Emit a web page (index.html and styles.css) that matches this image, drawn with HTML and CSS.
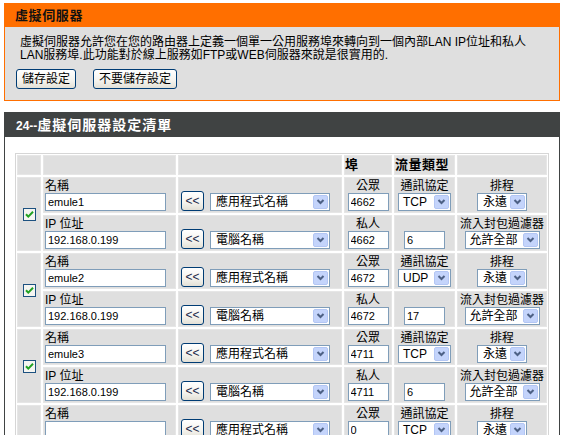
FILE: index.html
```html
<!DOCTYPE html>
<html lang="zh-Hant">
<head>
<meta charset="utf-8">
<title>虛擬伺服器</title>
<link rel="stylesheet" href="styles.css">
</head>
<body>
<div class="page">
  <section class="box">
    <div class="box-head">虛擬伺服器</div>
    <div class="box-body">
      <p class="desc">虛擬伺服器允許您在您的路由器上定義一個單一公用服務埠來轉向到一個內部LAN IP位址和私人<br>LAN服務埠.此功能對於線上服務如FTP或WEB伺服器來說是很實用的.</p>
      <div class="actions">
        <button class="btn">儲存設定</button>
        <button class="btn">不要儲存設定</button>
      </div>
    </div>
  </section>

  <section class="panel">
    <div class="panel-head"><span class="count">24--</span>虛擬伺服器設定清單</div>
    <div class="panel-body">
      <table class="vs">
        <colgroup>
          <col class="c1"><col class="c2"><col class="c3"><col class="c4"><col class="c5"><col class="c6">
        </colgroup>
        <tr class="hdr">
          <td></td><td></td><td></td><td class="h">埠</td><td class="h">流量類型</td><td></td>
        </tr>

        <tr>
          <td rowspan="2" class="chk"><svg class="cb" width="13" height="13" viewBox="0 0 13 13"><rect x="0.5" y="0.5" width="12" height="12" fill="#f5f5f1" stroke="#1c5180"/><path d="M3 6.2 L5.3 8.6 L10 3.8" fill="none" stroke="#21a121" stroke-width="2"/></svg></td>
          <td class="fld"><div class="lbl">名稱</div><input class="txt in-name" value="emule1"></td>
          <td class="pickcell"><div class="pick"><button class="arr">&lt;&lt;</button><span class="sel sel-app"><span>應用程式名稱</span><svg class="dd" width="15" height="14" viewBox="0 0 15 14"><rect x="0.5" y="0.5" width="14" height="13" rx="1.5" fill="#c4d4fb" stroke="#b3c6f4"/><path d="M4.5 5 L7.5 8 L10.5 5" fill="none" stroke="#4d6185" stroke-width="2"/></svg></span></div></td>
          <td class="ctr"><div class="lbl">公眾</div><input class="txt in-port" value="4662"></td>
          <td class="ctr"><div class="lbl">通訊協定</div><span class="sel sel-proto"><span>TCP</span><svg class="dd" width="15" height="14" viewBox="0 0 15 14"><rect x="0.5" y="0.5" width="14" height="13" rx="1.5" fill="#c4d4fb" stroke="#b3c6f4"/><path d="M4.5 5 L7.5 8 L10.5 5" fill="none" stroke="#4d6185" stroke-width="2"/></svg></span></td>
          <td class="ctr"><div class="lbl">排程</div><span class="sel sel-sched"><span>永遠</span><svg class="dd" width="15" height="14" viewBox="0 0 15 14"><rect x="0.5" y="0.5" width="14" height="13" rx="1.5" fill="#c4d4fb" stroke="#b3c6f4"/><path d="M4.5 5 L7.5 8 L10.5 5" fill="none" stroke="#4d6185" stroke-width="2"/></svg></span></td>
        </tr>
        <tr>
          <td class="fld"><div class="lbl">IP 位址</div><input class="txt in-name" value="192.168.0.199"></td>
          <td class="pickcell"><div class="pick"><button class="arr">&lt;&lt;</button><span class="sel sel-app"><span>電腦名稱</span><svg class="dd" width="15" height="14" viewBox="0 0 15 14"><rect x="0.5" y="0.5" width="14" height="13" rx="1.5" fill="#c4d4fb" stroke="#b3c6f4"/><path d="M4.5 5 L7.5 8 L10.5 5" fill="none" stroke="#4d6185" stroke-width="2"/></svg></span></div></td>
          <td class="ctr"><div class="lbl">私人</div><input class="txt in-port" value="4662"></td>
          <td class="ctr"><div class="lbl">&nbsp;</div><input class="txt in-port" value="6"></td>
          <td class="ctr"><div class="lbl">流入封包過濾器</div><span class="sel sel-filter"><span>允許全部</span><svg class="dd" width="15" height="14" viewBox="0 0 15 14"><rect x="0.5" y="0.5" width="14" height="13" rx="1.5" fill="#c4d4fb" stroke="#b3c6f4"/><path d="M4.5 5 L7.5 8 L10.5 5" fill="none" stroke="#4d6185" stroke-width="2"/></svg></span></td>
        </tr>

        <tr>
          <td rowspan="2" class="chk"><svg class="cb" width="13" height="13" viewBox="0 0 13 13"><rect x="0.5" y="0.5" width="12" height="12" fill="#f5f5f1" stroke="#1c5180"/><path d="M3 6.2 L5.3 8.6 L10 3.8" fill="none" stroke="#21a121" stroke-width="2"/></svg></td>
          <td class="fld"><div class="lbl">名稱</div><input class="txt in-name" value="emule2"></td>
          <td class="pickcell"><div class="pick"><button class="arr">&lt;&lt;</button><span class="sel sel-app"><span>應用程式名稱</span><svg class="dd" width="15" height="14" viewBox="0 0 15 14"><rect x="0.5" y="0.5" width="14" height="13" rx="1.5" fill="#c4d4fb" stroke="#b3c6f4"/><path d="M4.5 5 L7.5 8 L10.5 5" fill="none" stroke="#4d6185" stroke-width="2"/></svg></span></div></td>
          <td class="ctr"><div class="lbl">公眾</div><input class="txt in-port" value="4672"></td>
          <td class="ctr"><div class="lbl">通訊協定</div><span class="sel sel-proto"><span>UDP</span><svg class="dd" width="15" height="14" viewBox="0 0 15 14"><rect x="0.5" y="0.5" width="14" height="13" rx="1.5" fill="#c4d4fb" stroke="#b3c6f4"/><path d="M4.5 5 L7.5 8 L10.5 5" fill="none" stroke="#4d6185" stroke-width="2"/></svg></span></td>
          <td class="ctr"><div class="lbl">排程</div><span class="sel sel-sched"><span>永遠</span><svg class="dd" width="15" height="14" viewBox="0 0 15 14"><rect x="0.5" y="0.5" width="14" height="13" rx="1.5" fill="#c4d4fb" stroke="#b3c6f4"/><path d="M4.5 5 L7.5 8 L10.5 5" fill="none" stroke="#4d6185" stroke-width="2"/></svg></span></td>
        </tr>
        <tr>
          <td class="fld"><div class="lbl">IP 位址</div><input class="txt in-name" value="192.168.0.199"></td>
          <td class="pickcell"><div class="pick"><button class="arr">&lt;&lt;</button><span class="sel sel-app"><span>電腦名稱</span><svg class="dd" width="15" height="14" viewBox="0 0 15 14"><rect x="0.5" y="0.5" width="14" height="13" rx="1.5" fill="#c4d4fb" stroke="#b3c6f4"/><path d="M4.5 5 L7.5 8 L10.5 5" fill="none" stroke="#4d6185" stroke-width="2"/></svg></span></div></td>
          <td class="ctr"><div class="lbl">私人</div><input class="txt in-port" value="4672"></td>
          <td class="ctr"><div class="lbl">&nbsp;</div><input class="txt in-port" value="17"></td>
          <td class="ctr"><div class="lbl">流入封包過濾器</div><span class="sel sel-filter"><span>允許全部</span><svg class="dd" width="15" height="14" viewBox="0 0 15 14"><rect x="0.5" y="0.5" width="14" height="13" rx="1.5" fill="#c4d4fb" stroke="#b3c6f4"/><path d="M4.5 5 L7.5 8 L10.5 5" fill="none" stroke="#4d6185" stroke-width="2"/></svg></span></td>
        </tr>

        <tr>
          <td rowspan="2" class="chk"><svg class="cb" width="13" height="13" viewBox="0 0 13 13"><rect x="0.5" y="0.5" width="12" height="12" fill="#f5f5f1" stroke="#1c5180"/><path d="M3 6.2 L5.3 8.6 L10 3.8" fill="none" stroke="#21a121" stroke-width="2"/></svg></td>
          <td class="fld"><div class="lbl">名稱</div><input class="txt in-name" value="emule3"></td>
          <td class="pickcell"><div class="pick"><button class="arr">&lt;&lt;</button><span class="sel sel-app"><span>應用程式名稱</span><svg class="dd" width="15" height="14" viewBox="0 0 15 14"><rect x="0.5" y="0.5" width="14" height="13" rx="1.5" fill="#c4d4fb" stroke="#b3c6f4"/><path d="M4.5 5 L7.5 8 L10.5 5" fill="none" stroke="#4d6185" stroke-width="2"/></svg></span></div></td>
          <td class="ctr"><div class="lbl">公眾</div><input class="txt in-port" value="4711"></td>
          <td class="ctr"><div class="lbl">通訊協定</div><span class="sel sel-proto"><span>TCP</span><svg class="dd" width="15" height="14" viewBox="0 0 15 14"><rect x="0.5" y="0.5" width="14" height="13" rx="1.5" fill="#c4d4fb" stroke="#b3c6f4"/><path d="M4.5 5 L7.5 8 L10.5 5" fill="none" stroke="#4d6185" stroke-width="2"/></svg></span></td>
          <td class="ctr"><div class="lbl">排程</div><span class="sel sel-sched"><span>永遠</span><svg class="dd" width="15" height="14" viewBox="0 0 15 14"><rect x="0.5" y="0.5" width="14" height="13" rx="1.5" fill="#c4d4fb" stroke="#b3c6f4"/><path d="M4.5 5 L7.5 8 L10.5 5" fill="none" stroke="#4d6185" stroke-width="2"/></svg></span></td>
        </tr>
        <tr>
          <td class="fld"><div class="lbl">IP 位址</div><input class="txt in-name" value="192.168.0.199"></td>
          <td class="pickcell"><div class="pick"><button class="arr">&lt;&lt;</button><span class="sel sel-app"><span>電腦名稱</span><svg class="dd" width="15" height="14" viewBox="0 0 15 14"><rect x="0.5" y="0.5" width="14" height="13" rx="1.5" fill="#c4d4fb" stroke="#b3c6f4"/><path d="M4.5 5 L7.5 8 L10.5 5" fill="none" stroke="#4d6185" stroke-width="2"/></svg></span></div></td>
          <td class="ctr"><div class="lbl">私人</div><input class="txt in-port" value="4711"></td>
          <td class="ctr"><div class="lbl">&nbsp;</div><input class="txt in-port" value="6"></td>
          <td class="ctr"><div class="lbl">流入封包過濾器</div><span class="sel sel-filter"><span>允許全部</span><svg class="dd" width="15" height="14" viewBox="0 0 15 14"><rect x="0.5" y="0.5" width="14" height="13" rx="1.5" fill="#c4d4fb" stroke="#b3c6f4"/><path d="M4.5 5 L7.5 8 L10.5 5" fill="none" stroke="#4d6185" stroke-width="2"/></svg></span></td>
        </tr>

        <tr>
          <td rowspan="2" class="chk"><svg class="cb" width="13" height="13" viewBox="0 0 13 13"><rect x="0.5" y="0.5" width="12" height="12" fill="#f5f5f1" stroke="#1c5180"/></svg></td>
          <td class="fld"><div class="lbl">名稱</div><input class="txt in-name" value=""></td>
          <td class="pickcell"><div class="pick"><button class="arr">&lt;&lt;</button><span class="sel sel-app"><span>應用程式名稱</span><svg class="dd" width="15" height="14" viewBox="0 0 15 14"><rect x="0.5" y="0.5" width="14" height="13" rx="1.5" fill="#c4d4fb" stroke="#b3c6f4"/><path d="M4.5 5 L7.5 8 L10.5 5" fill="none" stroke="#4d6185" stroke-width="2"/></svg></span></div></td>
          <td class="ctr"><div class="lbl">公眾</div><input class="txt in-port" value="0"></td>
          <td class="ctr"><div class="lbl">通訊協定</div><span class="sel sel-proto"><span>TCP</span><svg class="dd" width="15" height="14" viewBox="0 0 15 14"><rect x="0.5" y="0.5" width="14" height="13" rx="1.5" fill="#c4d4fb" stroke="#b3c6f4"/><path d="M4.5 5 L7.5 8 L10.5 5" fill="none" stroke="#4d6185" stroke-width="2"/></svg></span></td>
          <td class="ctr"><div class="lbl">排程</div><span class="sel sel-sched"><span>永遠</span><svg class="dd" width="15" height="14" viewBox="0 0 15 14"><rect x="0.5" y="0.5" width="14" height="13" rx="1.5" fill="#c4d4fb" stroke="#b3c6f4"/><path d="M4.5 5 L7.5 8 L10.5 5" fill="none" stroke="#4d6185" stroke-width="2"/></svg></span></td>
        </tr>
        <tr>
          <td class="fld"><div class="lbl">IP 位址</div><input class="txt in-name" value="0.0.0.0"></td>
          <td class="pickcell"><div class="pick"><button class="arr">&lt;&lt;</button><span class="sel sel-app"><span>電腦名稱</span><svg class="dd" width="15" height="14" viewBox="0 0 15 14"><rect x="0.5" y="0.5" width="14" height="13" rx="1.5" fill="#c4d4fb" stroke="#b3c6f4"/><path d="M4.5 5 L7.5 8 L10.5 5" fill="none" stroke="#4d6185" stroke-width="2"/></svg></span></div></td>
          <td class="ctr"><div class="lbl">私人</div><input class="txt in-port" value="0"></td>
          <td class="ctr"><div class="lbl">&nbsp;</div><input class="txt in-port" value="6"></td>
          <td class="ctr"><div class="lbl">流入封包過濾器</div><span class="sel sel-filter"><span>允許全部</span><svg class="dd" width="15" height="14" viewBox="0 0 15 14"><rect x="0.5" y="0.5" width="14" height="13" rx="1.5" fill="#c4d4fb" stroke="#b3c6f4"/><path d="M4.5 5 L7.5 8 L10.5 5" fill="none" stroke="#4d6185" stroke-width="2"/></svg></span></td>
        </tr>
      </table>
    </div>
  </section>
</div>
</body>
</html>
```

FILE: styles.css
```css
* { box-sizing: border-box; }

body {
  margin: 0;
  background: #fff;
  color: #000;
  font-family: "Liberation Sans", "Noto Sans CJK TC", sans-serif;
  font-size: 12px;
}

.page {
  width: 556px;
  margin: 3px 0 0 4px;
}

/* orange info box */
.box {
  background: #dfdfdf;
  border: 1px solid #ff6f00;
  border-top: 0;
}
.box-head {
  background: #ff6f00;
  height: 24px;
  margin: 0 -1px;
  padding-left: 11px;
  line-height: 25px;
  font-size: 13px;
  font-weight: bold;
  letter-spacing: 0.6px;
  color: #111;
}
.box-body {
  padding: 9px 10px 11px 11px;
}
.desc {
  margin: 0;
  padding-left: 4px;
  line-height: 13px;
  font-size: 12px;
}
.actions {
  display: flex;
  gap: 17px;
  margin-top: 7px;
}
.btn {
  height: 20px;
  padding: 0 5px;
  border: 1px solid #003c74;
  border-radius: 3px;
  background: linear-gradient(#ffffff, #f4f3ee 60%, #e3e0d6);
  font-family: "Liberation Sans", "Noto Sans CJK TC", sans-serif;
  font-size: 12px;
  line-height: 18px;
  color: #000;
}

/* dark list panel */
.panel {
  margin-top: 11px;
}
.panel-head {
  background: #404343;
  height: 25px;
  padding-left: 12px;
  color: #fff;
  font-size: 14px;
  font-weight: bold;
  letter-spacing: 1px;
  line-height: 27px;
}
.panel-head .count {
  font-size: 12px;
  letter-spacing: 0;
}
.panel-body {
  border-left: 1px solid #404343;
  border-right: 1px solid #404343;
  padding: 16px 10px 20px 10px;
}

.vs {
  table-layout: fixed;
  width: 534px;
  border-collapse: separate;
  border-spacing: 2px;
  outline: 1px solid #d6d6d6;
  outline-offset: -1px;
}
.c1 { width: 24px; }
.c2 { width: 133px; }
.c3 { width: 164px; }
.c4 { width: 48px; }
.c5 { width: 61px; }
.c6 { width: 90px; }

.vs td {
  background: #dfdfdf;
  padding: 0;
  vertical-align: top;
  height: 36px;
  box-shadow: inset 0 0 0 1px #e6e6e6;
}
.vs tr.hdr td {
  height: 20px;
}
.vs td.h {
  padding-left: 1px;
  font-size: 13px;
  font-weight: bold;
  letter-spacing: 0.5px;
  line-height: 20px;
}

.lbl {
  height: 14px;
  line-height: 14px;
  white-space: nowrap;
}
.fld {
  padding: 2px 0 0 2px !important;
}
.ctr {
  padding-top: 2px !important;
  text-align: center;
}
.chk {
  vertical-align: middle !important;
  text-align: center;
}
.cb {
  display: inline-block;
  vertical-align: middle;
  margin-left: 1px;
}

.txt {
  display: block;
  height: 18px;
  margin: 0;
  padding: 0 2px;
  border: 1px solid #7f9db9;
  background: #fff;
  font-family: "Liberation Sans", "Noto Sans CJK TC", sans-serif;
  font-size: 11px;
  color: #000;
  text-align: left;
}
.in-name { width: 121px; }
.in-port { width: 41px; margin: 0 auto; }

.pickcell {
  vertical-align: bottom !important;
  padding: 0 0 2px 3px !important;
}
.pick {
  display: flex;
  align-items: flex-end;
  gap: 6px;
}
.arr {
  width: 23px;
  height: 20px;
  padding: 0;
  border: 1px solid #003c74;
  border-radius: 3px;
  background: linear-gradient(#ffffff, #f4f3ee 60%, #e3e0d6);
  font-family: "Liberation Sans", sans-serif;
  font-size: 12px;
  line-height: 18px;
  color: #1a2a4a;
}

.sel {
  display: flex;
  align-items: center;
  justify-content: space-between;
  height: 18px;
  padding-left: 5px;
  border: 1px solid #7f9db9;
  background: #fff;
  font-size: 12px;
  line-height: 16px;
  text-align: left;
  white-space: nowrap;
}
.sel .dd {
  flex: none;
  margin-right: 1px;
}
.ctr .sel { margin: 0 auto; }
.sel-app { width: 120px; }
.sel-proto { width: 53px; padding-left: 4px; }
.sel-sched { width: 50px; }
.sel-filter { width: 75px; padding-left: 4px; }
```
